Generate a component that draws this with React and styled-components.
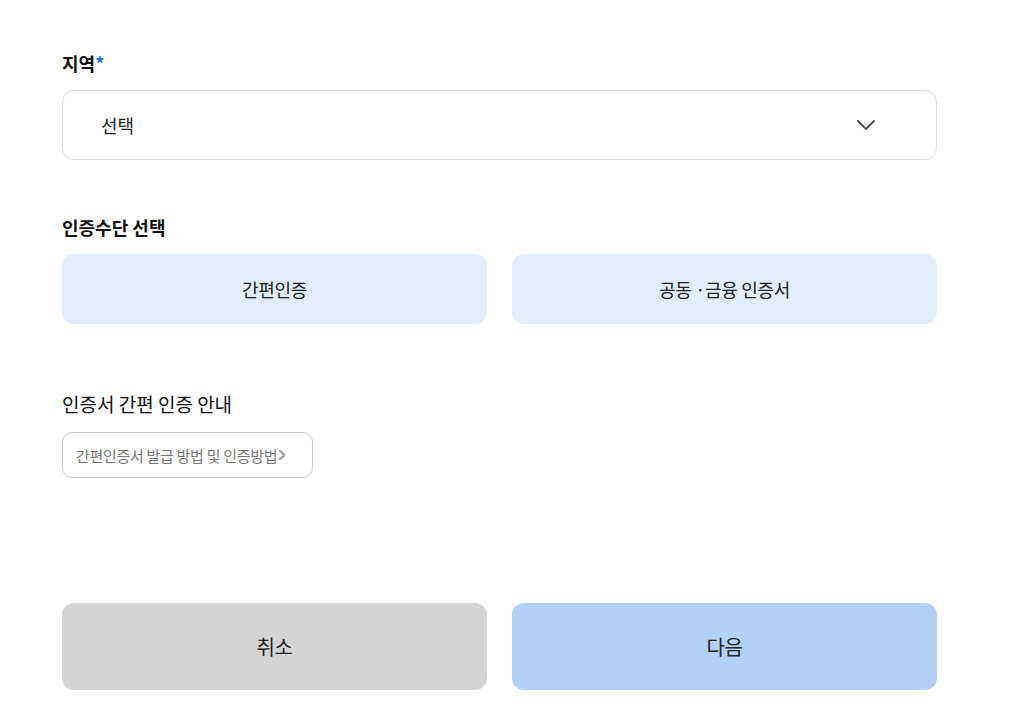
import React from "react";
import styled, { createGlobalStyle } from "styled-components";

const GlobalStyle = createGlobalStyle`
  html, body {
    margin: 0;
    padding: 0;
    background: #fff;
  }
  body {
    font-family: "Noto Sans CJK KR", "Noto Sans", sans-serif;
    color: #111;
  }
`;

const Page = styled.div`
  width: 875px;
  padding: 50px 0 0 62px;
  display: flex;
  flex-direction: column;
`;

const Label = styled.div`
  font-size: ${(p) => (p.$light ? 19 : 18)}px;
  line-height: 26px;
  font-weight: ${(p) => (p.$light ? 400 : 700)};
  color: #111;
  margin-top: ${(p) => p.$top || 0}px;
  margin-bottom: ${(p) => p.$bottom || 14}px;

  .req {
    color: #1f6fd6;
  }
`;

const Select = styled.div`
  height: 70px;
  box-sizing: border-box;
  border: 1px solid #dedede;
  border-radius: 12px;
  display: flex;
  align-items: center;
  justify-content: space-between;
  padding: 0 60px 0 38px;
  font-size: 18px;
  color: #222;
`;

const Row = styled.div`
  display: grid;
  grid-template-columns: 1fr 1fr;
  gap: 25px;
  margin-top: ${(p) => p.$top || 0}px;
`;

const Choice = styled.button`
  height: ${(p) => p.$height || 70}px;
  border: none;
  border-radius: 12px;
  background: ${(p) => p.$bg || "#e2eefd"};
  font-family: inherit;
  font-size: ${(p) => p.$size || 18}px;
  color: #222;
  display: flex;
  align-items: center;
  justify-content: center;
  letter-spacing: -0.3px;
  padding: 0;
`;

const Guide = styled.button`
  align-self: flex-start;
  width: 251px;
  height: 46px;
  box-sizing: border-box;
  border: 1px solid #cfcfcf;
  border-radius: 10px;
  background: #fff;
  font-family: inherit;
  font-size: 15px;
  color: #777;
  display: flex;
  align-items: center;
  padding: 0 0 0 13px;
  gap: 1px;
  letter-spacing: -0.3px;
  white-space: nowrap;
`;

const Chevron = () => (
  <svg width="20" height="12" viewBox="0 0 20 12" fill="none">
    <path d="M2 2l8 8 8-8" stroke="#555" strokeWidth="2" strokeLinecap="round" strokeLinejoin="round" />
  </svg>
);

const SmallArrow = () => (
  <svg width="9" height="12" viewBox="0 0 9 12" fill="none">
    <path d="M2 2l4.5 4-4.5 4" stroke="#aaa" strokeWidth="2.4" strokeLinecap="round" strokeLinejoin="round" />
  </svg>
);

const App = () => (
  <>
    <GlobalStyle />
    <Page>
      <Label>
        지역<span className="req">*</span>
      </Label>
      <Select>
        <span>선택</span>
        <Chevron />
      </Select>

      <Label $top={54}>인증수단 선택</Label>
      <Row>
        <Choice>간편인증</Choice>
        <Choice>공동 ·금융 인증서</Choice>
      </Row>

      <Label $light $top={67} $bottom={15}>
        인증서 간편 인증 안내
      </Label>
      <Guide>
        간편인증서 발급 방법 및 인증방법
        <SmallArrow />
      </Guide>

      <Row $top={125}>
        <Choice $height={87} $bg="#d4d4d4" $size={20}>
          취소
        </Choice>
        <Choice $height={87} $bg="#b3d1f6" $size={20}>
          다음
        </Choice>
      </Row>
    </Page>
  </>
);

export default App;
